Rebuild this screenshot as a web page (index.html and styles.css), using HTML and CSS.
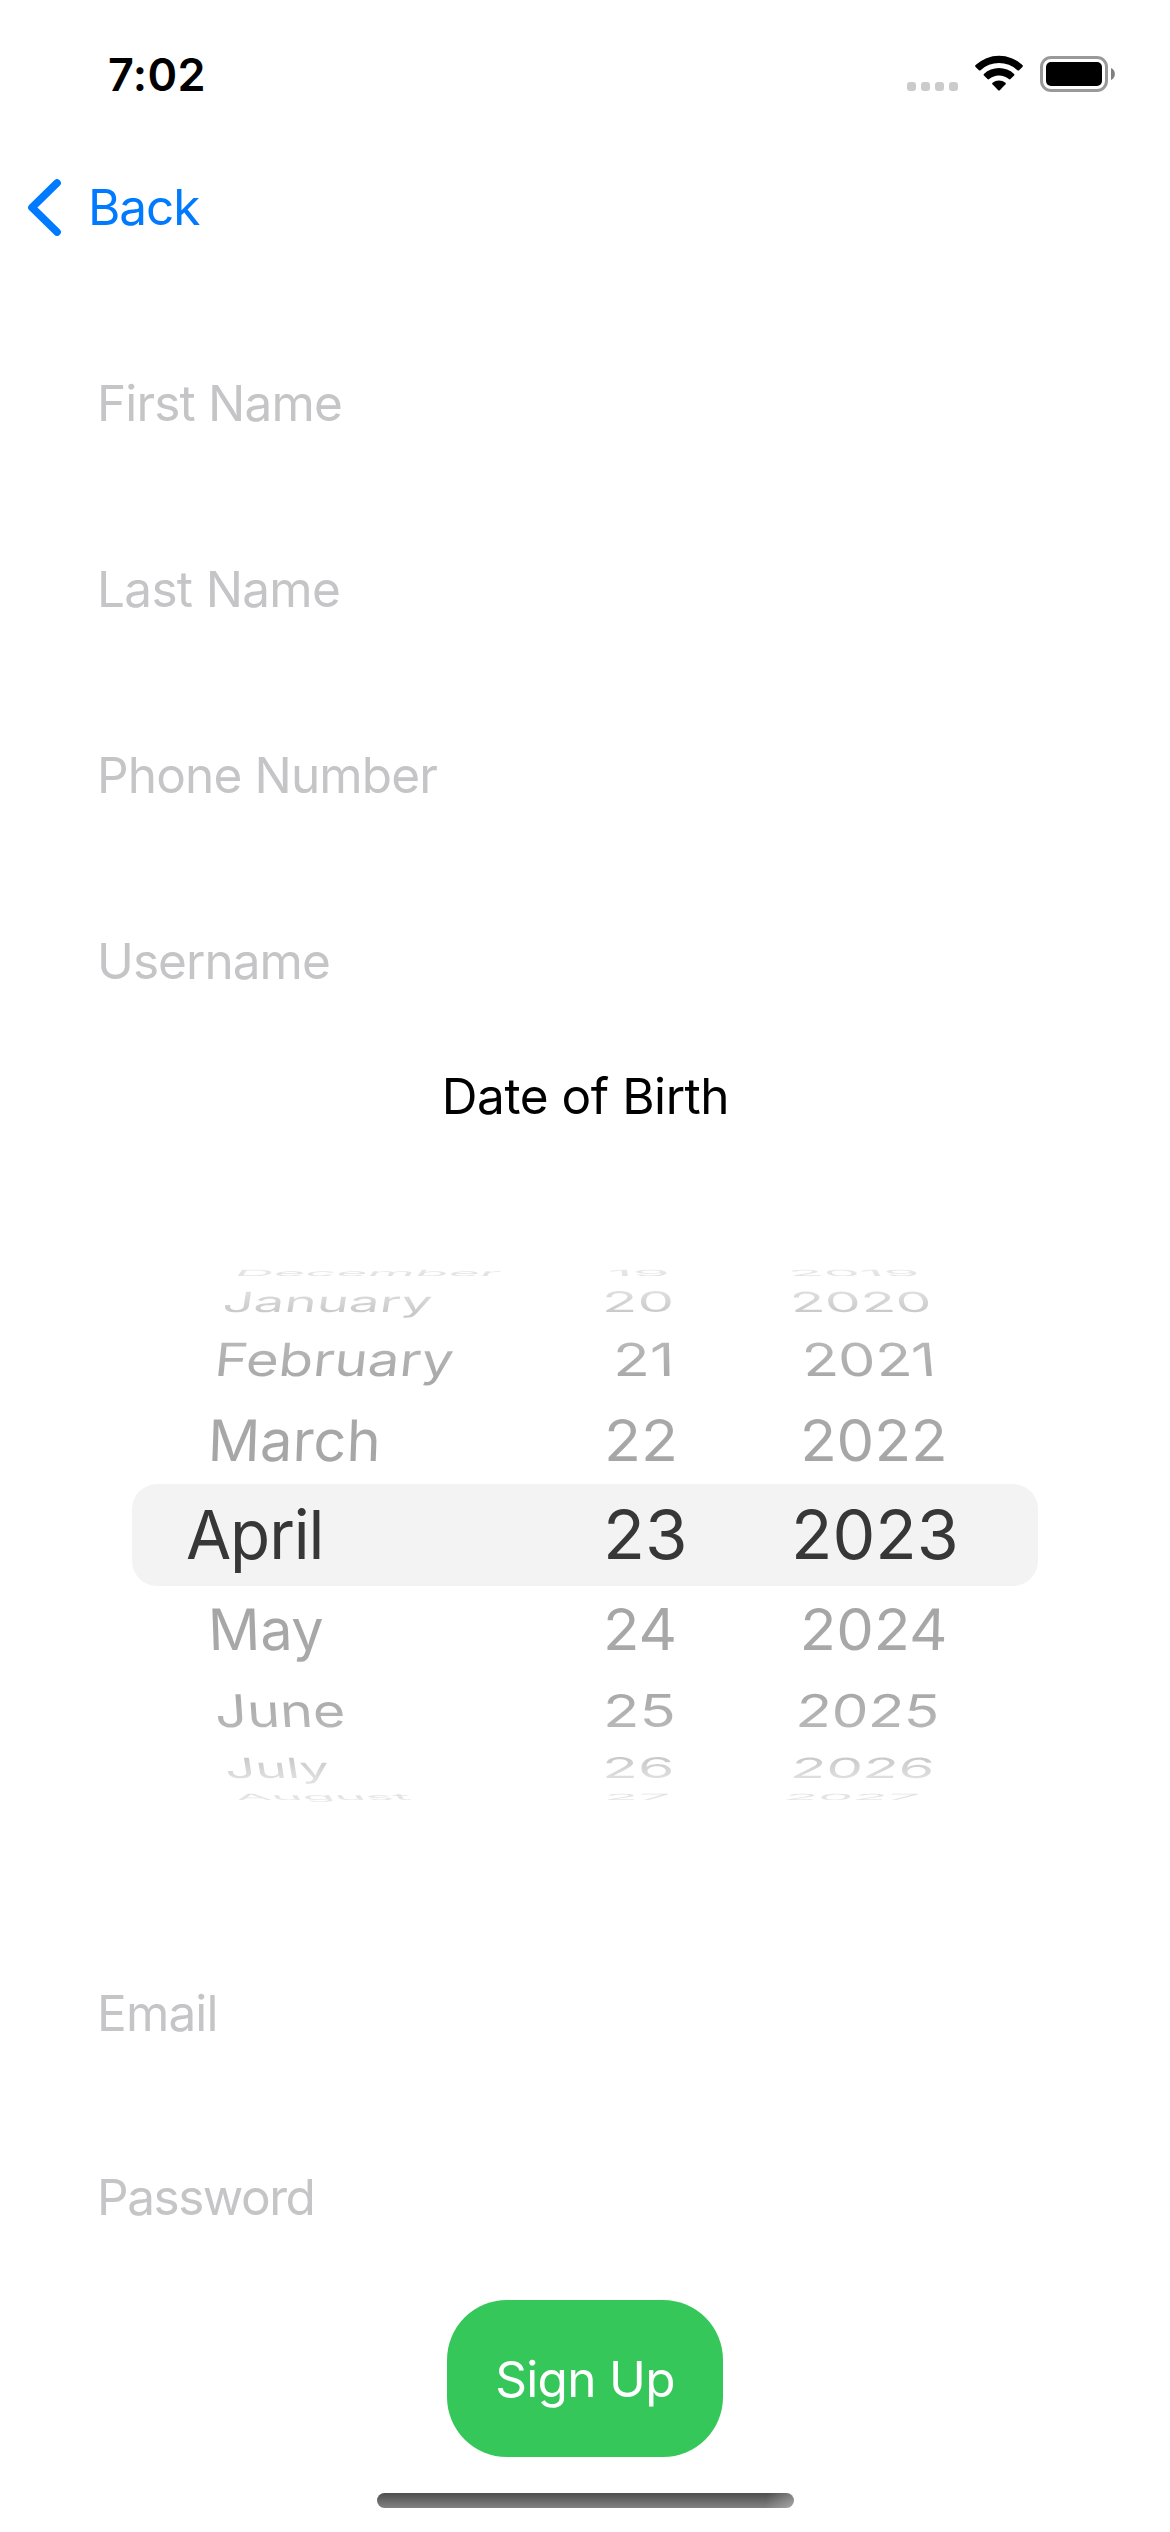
FILE: index.html
```html
<!DOCTYPE html>
<html lang="en">
<head>
<meta charset="utf-8">
<title>Sign Up</title>
<link rel="stylesheet" href="styles.css">
</head>
<body>
<main class="screen">
  <header class="status-bar">
    <span class="time">7:02</span>
    <div class="status-icons">
      <svg class="cell-dots" width="51" height="9" viewBox="0 0 51 9" fill="#cbcbcb">
        <rect x="0" width="9" height="9" rx="3"/><rect x="14" width="9" height="9" rx="3"/><rect x="28" width="9" height="9" rx="3"/><rect x="42" width="9" height="9" rx="3"/>
      </svg>
      <svg class="wifi" width="48" height="36" viewBox="0 0 48 36">
        <path d="M0.6 10.1 Q-0.3 11 0.6 11.9 L3.9 15.2 Q4.7 16 5.6 15.2 A27 27 0 0 1 42.4 15.2 Q43.3 16 44.1 15.2 L47.4 11.9 Q48.3 11 47.4 10.1 A34 34 0 0 0 0.6 10.1Z"/>
        <path d="M8.9 18.9 Q8.1 19.7 8.9 20.5 L12.5 24.1 Q13.3 24.8 14.2 24.1 A15 15 0 0 1 33.8 24.1 Q34.7 24.8 35.5 24.1 L39.1 20.5 Q39.9 19.7 39.1 18.9 A22.5 22.5 0 0 0 8.9 18.9Z"/>
        <path d="M17.5 27.7 Q16.8 28.5 17.5 29.3 L23.2 35.2 Q24 36 24.8 35.2 L30.5 29.3 Q31.2 28.5 30.5 27.7 A10.5 10.5 0 0 0 17.5 27.7Z"/>
      </svg>
      <svg class="battery" width="75" height="36" viewBox="0 0 75 36">
        <rect x="1.5" y="1.5" width="65" height="33" rx="9.5" fill="none" stroke="#999" stroke-width="3"/>
        <rect x="6" y="6" width="56" height="24" rx="5"/>
        <path d="M71 12 A6.6 6.6 0 0 1 71 24Z" fill="#808080"/>
      </svg>
    </div>
  </header>

  <nav class="nav-bar">
    <svg width="33" height="57" viewBox="0 0 33 57" fill="none" stroke="#007aff" stroke-width="7.6" stroke-linecap="round" stroke-linejoin="round"><path d="M29 4 L4 28.5 L29 53"/></svg>
    <span class="back">Back</span>
  </nav>

  <section class="fields">
    <div class="field first">First Name</div>
    <div class="field last">Last Name</div>
    <div class="field phone">Phone Number</div>
    <div class="field user">Username</div>
  </section>

  <h1 class="dob">Date of Birth</h1>

  <section class="picker">
    <div class="wheel months">
      <span>December</span><span>January</span><span>February</span><span>March</span><span>April</span><span>May</span><span>June</span><span>July</span><span>August</span>
    </div>
    <div class="wheel days">
      <span>19</span><span>20</span><span>21</span><span>22</span><span>23</span><span>24</span><span>25</span><span>26</span><span>27</span>
    </div>
    <div class="wheel years">
      <span>2019</span><span>2020</span><span>2021</span><span>2022</span><span>2023</span><span>2024</span><span>2025</span><span>2026</span><span>2027</span>
    </div>
  </section>

  <section class="fields account">
    <div class="field email">Email</div>
    <div class="field password">Password</div>
  </section>

  <button class="sign-up" type="button">Sign Up</button>
  <div class="home-indicator"></div>
</main>
</body>
</html>
```
FILE: styles.css
```css
* { box-sizing: border-box; }
body { margin: 0; background: #fff; }
.screen {
  width: 1170px; height: 2532px; overflow: hidden;
  display: flex; flex-direction: column;
  font-family: Inter, "Liberation Sans", sans-serif;
  font-size: 49.5px; letter-spacing: -0.85px; color: #000;
}

.status-bar { height: 141px; display: flex; justify-content: space-between; padding: 0 55px 0 108px; }
.time { font-size: 45px; font-weight: 600; line-height: 150px; letter-spacing: 0.35px; }
.status-icons { display: flex; align-items: flex-end; height: 91px; }
.wifi { margin-left: 17px; }
.battery { margin-left: 17px; margin-bottom: -1px; }

.nav-bar { height: 132px; display: flex; align-items: center; padding-left: 28px; color: #007aff; }
.back { margin-left: 27px; line-height: 132px; letter-spacing: -1.05px; }

.fields { margin-top: 37px; padding-left: 97px; color: #c5c5c7; }
.field { line-height: 186px; }
.last { letter-spacing: -0.68px; }
.user { letter-spacing: -0.95px; }
.dob { margin: 0 0 0 1px; font-size: inherit; font-weight: 400; line-height: 84px; letter-spacing: -0.45px; text-align: center; }

/* Date wheels: rows shrink and tilt away from the selected one */
.picker {
  width: 906px; height: 542px; margin: 126px 0 0 132px;
  display: grid; grid-template-columns: 456px 180px 270px;
  position: relative; isolation: isolate;
}
.picker::before {
  content: ""; position: absolute; z-index: -1; top: 220px; left: 0;
  width: 100%; height: 102px; border-radius: 25px; background: #f3f3f3;
}
.wheel { display: grid; grid-template-rows: 18px 40px 75px 87px 102px 87px 75px 40px 18px; align-items: center; justify-items: start; }
.wheel span {
  font-size: 57px; line-height: 76px; letter-spacing: 0; white-space: nowrap;
  margin: -40px 0 -40px var(--x); transform-origin: 0 50%;
  transform: skewX(var(--k, 0deg)) scale(var(--sx, 1), var(--sy, 1));
  color: transparent; -webkit-background-clip: text; background-clip: text;
}
.wheel span:nth-child(1) { --sy: .15; background-image: linear-gradient(#e9e9e9, #dfdfdf); }
.wheel span:nth-child(2) { --sy: .49; background-image: linear-gradient(#e0e0e0 20%, #c8c8c8 80%); }
.wheel span:nth-child(3) { --sy: .80; background-image: linear-gradient(#b8b8b8 20%, #a9a9a9 80%); }
.wheel span:nth-child(4) { background-image: linear-gradient(#a9a9a9, #a5a5a5); }
.wheel span:nth-child(5) { font-size: 68px; color: #373737; margin-top: -42px; }
.wheel span:nth-child(6) { background-image: linear-gradient(#a5a5a5, #a9a9a9); }
.wheel span:nth-child(7) { --sy: .79; background-image: linear-gradient(#a9a9a9 20%, #b8b8b8 80%); }
.wheel span:nth-child(8) { --sy: .49; background-image: linear-gradient(#c8c8c8 20%, #e0e0e0 80%); }
.wheel span:nth-child(9) { --sy: .15; background-image: linear-gradient(#dfdfdf, #e9e9e9); }

.months span:nth-child(1) { --x: 103px; --sx: .95; --k: -35deg; }
.months span:nth-child(2) { --x: 91px; --sx: .958; --k: -9deg; }
.months span:nth-child(3) { --x: 83px; --sx: .99; --k: -6deg; }
.months span:nth-child(4) { --x: 76px; --sx: 1.015; --k: -2deg; }
.months span:nth-child(5) { --x: 53.5px; --sx: .965; letter-spacing: -1.2px; }
.months span:nth-child(6) { --x: 76px; --sx: 1.012; --k: 2deg; }
.months span:nth-child(7) { --x: 83px; --sx: .978; --k: 4deg; }
.months span:nth-child(8) { --x: 92.5px; --sx: .928; --k: 9deg; }
.months span:nth-child(9) { --x: 103px; --sx: .92; --k: 35deg; }

.days span:nth-child(1) { --x: 20px; --sx: 1.06; --k: 8deg; }
.days span:nth-child(2) { --x: 13.5px; --sx: 1.019; }
.days span:nth-child(3) { --x: 24.5px; --sx: 1.06; --k: 1deg; }
.days span:nth-child(4) { --x: 16px; --sx: 1.065; }
.days span:nth-child(5) { --x: 15px; --sx: 1.014; }
.days span:nth-child(6) { --x: 15px; --sx: 1.049; }
.days span:nth-child(7) { --x: 14.5px; --sx: 1.05; }
.days span:nth-child(8) { --x: 13.5px; --sx: 1.034; }
.days span:nth-child(9) { --x: 16px; --sx: .987; --k: -8deg; }

.years span:nth-child(1) { --x: 20px; --sx: 1.02; --k: 30deg; }
.years span:nth-child(2) { --x: 22px; --sx: 1; --k: 7deg; }
.years span:nth-child(3) { --x: 34px; --sx: 1.04; --k: 5deg; }
.years span:nth-child(4) { --x: 31.5px; --sx: 1.05; --k: 1.5deg; }
.years span:nth-child(5) { --x: 23px; }
.years span:nth-child(6) { --x: 31.5px; --sx: 1.045; --k: -1.5deg; }
.years span:nth-child(7) { --x: 28px; --sx: 1.025; --k: -4deg; }
.years span:nth-child(8) { --x: 22.5px; --sx: 1.02; --k: -8deg; }
.years span:nth-child(9) { --x: 16px; --sx: .98; --k: -30deg; }

.account { margin-top: 115px; }
.account .field { line-height: 184px; }
.password { letter-spacing: -1.47px; }

.sign-up {
  align-self: center; width: 276px; height: 157px; margin-top: 11px; padding: 0;
  border: 0; border-radius: 60px; background: #35c759; color: #fff;
  font: inherit; letter-spacing: -0.68px;
}
.home-indicator {
  align-self: center; width: 417px; height: 15px; margin-top: 36px; border-radius: 8px;
  background: linear-gradient(100deg, transparent 93%, rgba(255,255,255,.3)), linear-gradient(#4e4e4e, #828282);
}
```
